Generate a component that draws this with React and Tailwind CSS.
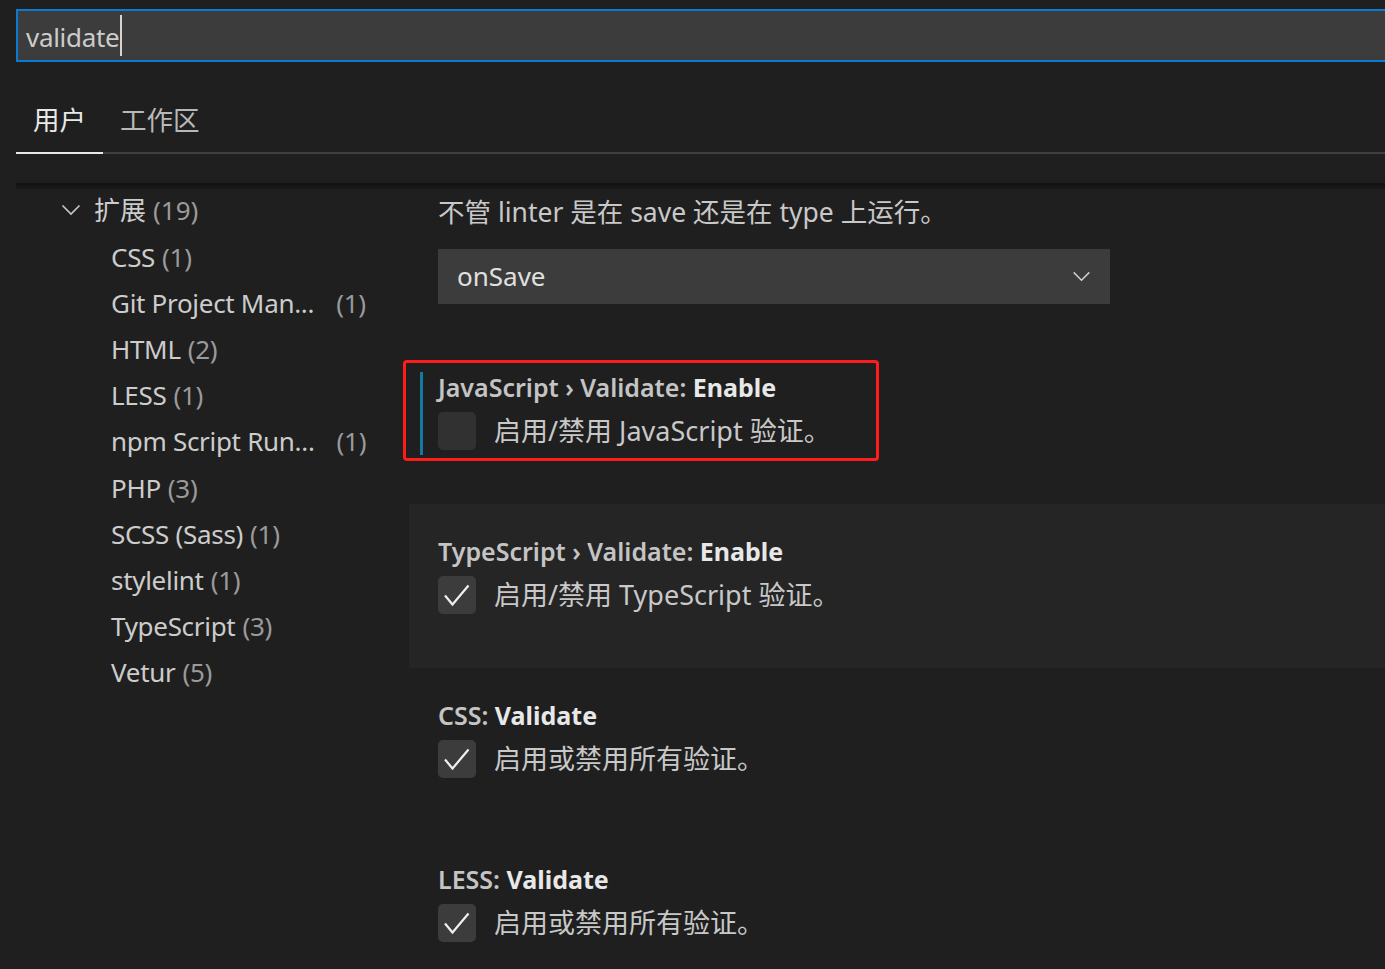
import { useState } from 'react';

const FONT = { fontFamily: '"Noto Sans", "Noto Sans CJK SC", sans-serif' };

const groups = [
  { name: 'CSS', count: 1 },
  { name: 'Git Project Man...', count: 1, padded: true },
  { name: 'HTML', count: 2 },
  { name: 'LESS', count: 1 },
  { name: 'npm Script Run...', count: 1, padded: true },
  { name: 'PHP', count: 3 },
  { name: 'SCSS (Sass)', count: 1 },
  { name: 'stylelint', count: 1 },
  { name: 'TypeScript', count: 3 },
  { name: 'Vetur', count: 5 },
];

const settings = [
  {
    id: 'js',
    prefix: 'JavaScript › Validate: ',
    key: 'Enable',
    desc: '启用/禁用 JavaScript 验证。',
    checked: false,
    focused: true,
  },
  {
    id: 'ts',
    prefix: 'TypeScript › Validate: ',
    key: 'Enable',
    desc: '启用/禁用 TypeScript 验证。',
    checked: true,
    hovered: true,
  },
  { id: 'css', prefix: 'CSS: ', key: 'Validate', desc: '启用或禁用所有验证。', checked: true },
  { id: 'less', prefix: 'LESS: ', key: 'Validate', desc: '启用或禁用所有验证。', checked: true },
];

function Chevron({ className }) {
  return (
    <svg viewBox="0 0 20 12" className={className} fill="none" stroke="currentColor" strokeWidth="1.6">
      <path d="M1.5 1.5 L10 10 L18.5 1.5" />
    </svg>
  );
}

function Checkbox({ checked }) {
  return (
    <div
      className={`flex h-[38px] w-[38px] shrink-0 items-center justify-center rounded-[5px] ${
        checked ? 'bg-[#3c3c3c]' : 'bg-[#313131]'
      }`}
    >
      {checked && (
        <svg viewBox="0 0 38 38" className="h-[38px] w-[38px]" fill="none" stroke="#f0f0f0" strokeWidth="2.2">
          <path d="M7 19.5 L14.5 28.5 L30.5 9.5" />
        </svg>
      )}
    </div>
  );
}

function SettingItem({ item }) {
  return (
    <div className={`relative h-[164px] pl-[29px] pt-[32px] ${item.hovered ? 'bg-[#252525]' : ''}`}>
      {item.focused && (
        <>
          <div className="absolute left-[11px] top-[32px] h-[83px] w-[3px] bg-[#1479a0]" />
          <div className="pointer-events-none absolute left-[-6px] top-[20px] h-[101px] w-[476px] rounded-[4px] border-[3px] border-[#ff1c1c]" />
        </>
      )}
      <div className="h-[30px] text-[25px] leading-[30px] font-semibold">
        <span className="text-[#c4c4c4]">{item.prefix}</span>
        <span className="font-bold text-[#e8e8e8]">{item.key}</span>
      </div>
      <div className="mt-[10px] flex items-center gap-[18px]">
        <Checkbox checked={item.checked} />
        <span className="text-[27px] leading-[38px] text-[#c8c8c8]">{item.desc}</span>
      </div>
    </div>
  );
}

export default function App() {
  const [query] = useState('validate');

  return (
    <div className="h-[969px] w-[1385px] overflow-hidden bg-[#1f1f1f] pl-4 pt-[9px]" style={FONT}>
      {/* search */}
      <div className="flex h-[53px] w-[1400px] items-center border-2 border-[#0a7ad2] bg-[#3c3c3c] pl-[8px]">
        <span className="pt-[3px] text-[26px] leading-none tracking-[-0.3px] text-[#cccccc]">{query}</span>
        <span className="ml-[1px] h-[41px] w-[2px] bg-[#d4d4d4]" />
      </div>

      {/* scope tabs */}
      <div className="mt-[29px] flex w-[1400px] border-b-2 border-[#3f3f3f]">
        <div className="-mb-[2px] border-b-2 border-[#e8e8e8] px-[17px] pb-[12px] pt-[9px] text-[26.5px] leading-[40px] text-[#e8e8e8]">
          用户
        </div>
        <div className="px-[17px] pb-[12px] pt-[9px] text-[26.5px] leading-[40px] text-[#b8b8b8]">工作区</div>
      </div>

      <div className="mt-[29px] h-[6px] w-[1400px] bg-gradient-to-b from-[#121212] to-[#191919]" />

      <div className="flex">
        {/* table of contents */}
        <div className="w-[393px] shrink-0">
          <div className="flex h-[42px] items-center pl-[45px] text-[26px] text-[#cccccc]">
            <Chevron className="h-[12px] w-[20px] text-[#c8c8c8]" />
            <span className="ml-[13px]">扩展</span>
            <span className="ml-[7px] text-[#9a9a9a]">(19)</span>
          </div>
          <div className="mt-[3px]">
            {groups.map((g) => (
              <div key={g.name} className="flex h-[46.2px] items-center pl-[95px] text-[26px] tracking-[-0.3px]">
                <span className="text-[#cccccc]">{g.name}</span>
                <span className={`${g.padded ? 'ml-[22px]' : 'ml-[7px]'} text-[#9a9a9a]`}>({g.count})</span>
              </div>
            ))}
          </div>
        </div>

        {/* settings list */}
        <div className="flex-1">
          <div className="h-[151px] pl-[29px] pt-[5px]">
            <div className="text-[26.5px] leading-[36px] text-[#c8c8c8]">不管 linter 是在 save 还是在 type 上运行。</div>
            <div className="mt-[19px] flex h-[55px] w-[672px] items-center justify-between bg-[#3c3c3c] pl-[19px] pr-[19px]">
              <span className="text-[26px] text-[#e0e0e0]">onSave</span>
              <Chevron className="h-[11px] w-[19px] text-[#d0d0d0]" />
            </div>
          </div>
          {settings.map((s) => (
            <SettingItem key={s.id} item={s} />
          ))}
        </div>
      </div>
    </div>
  );
}
